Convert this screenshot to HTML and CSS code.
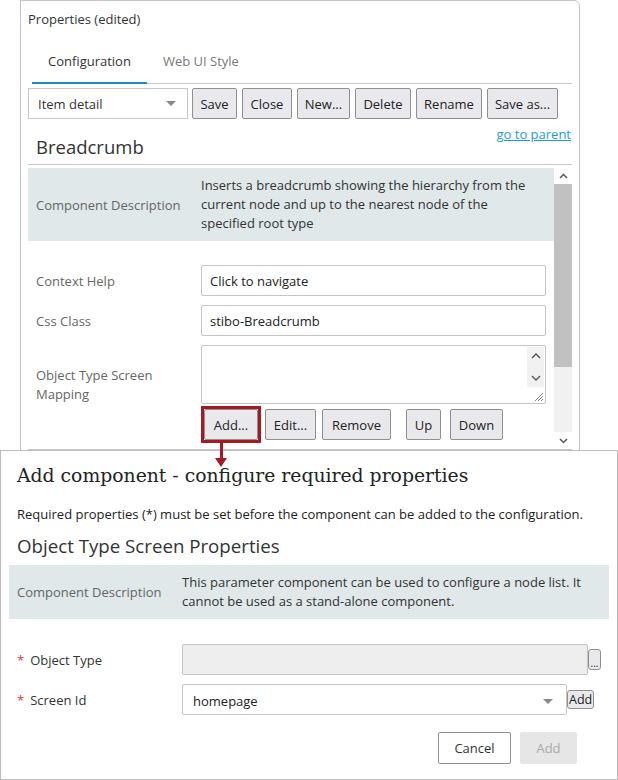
FILE: index.html
```html
<!DOCTYPE html>
<html>
<head>
<meta charset="utf-8">
<link rel="stylesheet" href="styles.css">
</head>
<body>
<div class="page">
  <div class="panel">
    <div class="panel-title">Properties (edited)</div>
    <div class="tabs">
      <div class="tab active">Configuration</div>
      <div class="tab">Web UI Style</div>
    </div>
    <div class="toolbar">
      <div class="select"><span>Item detail</span><span class="caret"></span></div>
      <button class="btn w-save">Save</button>
      <button class="btn w-close">Close</button>
      <button class="btn w-new">New...</button>
      <button class="btn w-delete">Delete</button>
      <button class="btn w-rename">Rename</button>
      <button class="btn w-saveas">Save as...</button>
    </div>
    <div class="parent-row"><a class="link">go to parent</a></div>
    <div class="comp-title">Breadcrumb</div>
    <div class="scroll-area">
      <div class="scroll-content">
        <div class="desc">
          <div class="desc-label">Component Description</div>
          <div class="desc-value">Inserts a breadcrumb showing the hierarchy from the current node and up to the nearest node of the specified root type</div>
        </div>
        <div class="field">
          <div class="label">Context Help</div>
          <div class="input">Click to navigate</div>
        </div>
        <div class="field">
          <div class="label">Css Class</div>
          <div class="input">stibo-Breadcrumb</div>
        </div>
        <div class="field top">
          <div class="label tall">Object Type Screen Mapping</div>
          <div class="list-col">
            <div class="textarea">
              <div class="ta-scroll">
                <svg width="10" height="6" viewBox="0 0 10 6"><path d="M1 5 L5 1 L9 5" fill="none" stroke="#555" stroke-width="1.4"/></svg>
                <svg width="10" height="6" viewBox="0 0 10 6"><path d="M1 1 L5 5 L9 1" fill="none" stroke="#555" stroke-width="1.4"/></svg>
              </div>
              <svg class="grip" width="11" height="11" viewBox="0 0 11 11"><path d="M10 2 L2 10 M10 5 L5 10 M10 8 L8 10" stroke="#888" stroke-width="1"/></svg>
            </div>
            <div class="list-btns">
              <span class="highlight"><button class="btn">Add...</button></span>
              <button class="btn b-edit">Edit...</button>
              <button class="btn b-remove">Remove</button>
              <button class="btn b-up">Up</button>
              <button class="btn b-down">Down</button>
            </div>
          </div>
        </div>
      </div>
      <div class="scrollbar">
        <div class="sb-arrow"><svg width="9" height="6" viewBox="0 0 9 6"><path d="M1 5 L4.5 1.5 L8 5" fill="none" stroke="#555" stroke-width="1.5"/></svg></div>
        <div class="sb-thumb"></div>
        <div class="sb-track"></div>
        <div class="sb-arrow"><svg width="9" height="6" viewBox="0 0 9 6"><path d="M1 1 L4.5 4.5 L8 1" fill="none" stroke="#555" stroke-width="1.5"/></svg></div>
      </div>
    </div>
    <div class="bottom-line"></div>
  </div>

  <div class="arrow">
    <div class="arrow-shaft"></div>
    <div class="arrow-head"></div>
  </div>

  <div class="dialog">
    <div class="dlg-title">Add component - configure required properties</div>
    <div class="dlg-note">Required properties (*) must be set before the component can be added to the configuration.</div>
    <div class="dlg-sub">Object Type Screen Properties</div>
    <div class="dlg-desc">
      <div class="dlg-desc-label">Component Description</div>
      <div class="dlg-desc-value">This parameter component can be used to configure a node list. It cannot be used as a stand-alone component.</div>
    </div>
    <div class="dlg-field">
      <div class="dlg-label"><span class="req">*</span>Object Type</div>
      <div class="dlg-input disabled"></div>
      <button class="mini-btn dots">...</button>
    </div>
    <div class="dlg-field">
      <div class="dlg-label"><span class="req">*</span>Screen Id</div>
      <div class="dlg-select"><span>homepage</span><span class="caret"></span></div>
      <button class="mini-btn add">Add</button>
    </div>
    <div class="dlg-actions">
      <button class="btn-cancel">Cancel</button>
      <button class="btn-add" disabled>Add</button>
    </div>
  </div>
</div>
</body>
</html>
```
FILE: styles.css
```css
* { box-sizing: border-box; }
html, body {
  margin: 0;
  padding: 0;
  background: #fff;
}
body {
  width: 618px;
  height: 780px;
  overflow: hidden;
  font-family: "Open Sans", "Noto Sans", sans-serif;
  font-size: 13px;
  color: #333;
}
.page {
  position: relative;
  width: 618px;
  height: 780px;
}
.panel {
  margin-left: 20px;
  width: 560px;
  height: 520px;
  border: 1px solid #c4c4c4;
  border-radius: 0 6px 0 0;
  padding: 0 7px;
}
.panel-title {
  height: 36px;
  line-height: 36px;
  color: #333;
}
.tabs {
  margin-left: 4px;
  display: flex;
  height: 47px;
  border-bottom: 1px solid #c9c9c9;
  align-items: flex-start;
}
.tab {
  padding: 2px 16px 0;
  line-height: 44px;
  height: 46px;
  color: #777;
}
.tab.active {
  color: #333;
  height: 47px;
  border-bottom: 2px solid #1f87c8;
}
.toolbar {
  display: flex;
  gap: 5px;
  margin-top: 4px;
  height: 31px;
}
.select {
  flex: none;
  width: 160px;
  height: 31px;
  border: 1px solid #c8c8c8;
  display: flex;
  align-items: center;
  justify-content: space-between;
  padding: 0 11px 0 9px;
  color: #333;
  margin-right: -1px;
}
.caret {
  width: 0;
  height: 0;
  border-left: 5px solid transparent;
  border-right: 5px solid transparent;
  border-top: 5px solid #888;
}
.btn {
  flex: none;
  font-family: inherit;
  font-size: 13px;
  color: #222;
  background: #e9e9ed;
  border: 1px solid #8f8f8f;
  border-radius: 2px;
  height: 31px;
  padding: 0;
  margin: 0;
  white-space: nowrap;
}
.w-save { width: 45px; }
.w-close { width: 50px; }
.w-new { width: 53px; }
.w-delete { width: 56px; }
.w-rename { width: 66px; }
.w-saveas { width: 71px; }
.parent-row {
  display: flex;
  justify-content: flex-end;
  height: 16px;
  margin-top: 1px;
  line-height: 30px;
}
.link {
  color: #1e9bd7;
  text-decoration: underline;
  line-height: 28px;
  margin-right: 1px;
}
.comp-title {
  font-size: 18.5px;
  color: #333;
  padding-left: 8px;
  line-height: 22px;
  height: 28px;
}
.scroll-area {
  border-top: 1px solid #c9c9c9;
  height: 285px;
  display: flex;
  padding-top: 2px;
  overflow: hidden;
}
.scroll-content {
  flex: 1;
  padding-top: 1px;
}
.desc {
  background: #e0e8ea;
  display: flex;
  align-items: center;
  padding: 8px 0;
  margin-bottom: 24px;
}
.desc-label {
  width: 173px;
  padding-left: 8px;
  color: #666;
  flex: none;
}
.desc-value {
  width: 338px;
  line-height: 19px;
  color: #333;
}
.field {
  display: flex;
  align-items: center;
  margin-bottom: 9px;
}
.field.top { align-items: flex-start; }
.label {
  width: 173px;
  padding-left: 8px;
  color: #666;
  flex: none;
}
.label.tall {
  padding-right: 15px;
  margin-top: 21px;
  line-height: 19px;
}
.input {
  width: 345px;
  height: 31px;
  border: 1px solid #c4c4c4;
  border-radius: 2px;
  padding: 0 8px;
  display: flex;
  align-items: center;
  color: #222;
}
.list-col {
  width: 345px;
}
.textarea {
  position: relative;
  height: 59px;
  border: 1px solid #c4c4c4;
  border-radius: 2px;
}
.ta-scroll {
  position: absolute;
  right: 1px;
  top: 1px;
  width: 17px;
  height: 40px;
  background: #f1f1f1;
  display: flex;
  flex-direction: column;
  align-items: center;
  justify-content: space-between;
  padding: 6px 0 6px;
}
.grip {
  position: absolute;
  right: 1px;
  bottom: 1px;
}
.list-btns {
  display: flex;
  align-items: center;
  margin-top: 2px;
}
.highlight {
  border: 3px solid #a21a23;
  display: inline-flex;
}
.highlight .btn { width: 54px; }
.b-edit { margin-left: 4px; width: 51px; }
.b-remove { margin-left: 6px; width: 69px; }
.b-up { margin-left: 15px; width: 35px; }
.b-down { margin-left: 9px; width: 53px; }
.scrollbar {
  width: 18px;
  display: flex;
  flex-direction: column;
  flex: none;
}
.sb-arrow {
  height: 17px;
  display: flex;
  align-items: center;
  justify-content: center;
}
.sb-thumb {
  height: 183px;
  background: #c1c1c1;
}
.sb-track {
  flex: 1;
  background: #f1f1f1;
}
.bottom-line {
  border-top: 1px solid #c9c9c9;
}

.arrow {
  position: absolute;
  left: 215px;
  top: 443px;
  width: 12px;
  z-index: 3;
  display: flex;
  flex-direction: column;
  align-items: center;
}
.arrow-shaft {
  width: 3px;
  height: 15px;
  background: #a21a23;
}
.arrow-head {
  width: 0;
  height: 0;
  border-left: 6px solid transparent;
  border-right: 6px solid transparent;
  border-top: 9px solid #a21a23;
}

.dialog {
  position: absolute;
  left: 0;
  top: 450px;
  width: 618px;
  height: 330px;
  background: #fff;
  border: 1px solid #bdbdbd;
  padding: 0 0 0 16px;
  z-index: 2;
}
.dlg-title {
  font-family: "DejaVu Serif", "Liberation Serif", serif;
  font-size: 18.8px;
  color: #222;
  margin-top: 12px;
  line-height: 26px;
}
.dlg-note {
  margin-top: 16px;
  color: #222;
  line-height: 18px;
}
.dlg-sub {
  font-size: 18.7px;
  color: #333;
  margin-top: 9px;
  line-height: 28px;
}
.dlg-desc {
  margin-left: -8px;
  width: 600px;
  background: #e0e8ea;
  display: flex;
  align-items: center;
  padding: 8px 0;
  margin-top: 5px;
}
.dlg-desc-label {
  width: 173px;
  padding-left: 8px;
  color: #666;
  flex: none;
}
.dlg-desc-value {
  line-height: 19px;
  color: #333;
  width: 420px;
}
.dlg-field {
  display: flex;
  align-items: center;
  margin-top: 9px;
}
.dlg-desc + .dlg-field { margin-top: 25px; }
.dlg-label {
  width: 165px;
  color: #333;
  flex: none;
}
.req {
  color: #d9363e;
  margin-right: 6px;
}
.dlg-input {
  width: 406px;
  height: 31px;
  border: 1px solid #c4c4c4;
  border-radius: 2px;
}
.dlg-input.disabled {
  background: #eeeeee;
}
.dlg-select {
  width: 385px;
  height: 31px;
  border: 1px solid #c4c4c4;
  border-radius: 2px;
  display: flex;
  align-items: center;
  justify-content: space-between;
  padding: 3px 13px 0 10px;
  color: #222;
}
.mini-btn {
  font-family: inherit;
  background: #e9e9ed;
  border: 1px solid #8f8f8f;
  border-radius: 3px;
  padding: 0 1px;
  margin: 0;
  color: #222;
}
.mini-btn.dots {
  width: 13px;
  height: 21px;
  font-size: 10px;
  line-height: 10px;
  padding: 6px 0 0;
}
.mini-btn.add {
  height: 19px;
  font-size: 12.5px;
  line-height: 16px;
}
.dlg-actions {
  display: flex;
  justify-content: flex-end;
  gap: 9px;
  margin-top: 17px;
  padding-right: 40px;
}
.btn-cancel, .btn-add {
  font-family: inherit;
  font-size: 13px;
  height: 32px;
  border-radius: 2px;
  margin: 0;
}
.btn-cancel {
  width: 73px;
  background: #fff;
  border: 1px solid #8f8f8f;
  color: #333;
}
.btn-add {
  width: 57px;
  background: #e6e6e6;
  border: 1px solid #e6e6e6;
  color: #aaa;
}
```
